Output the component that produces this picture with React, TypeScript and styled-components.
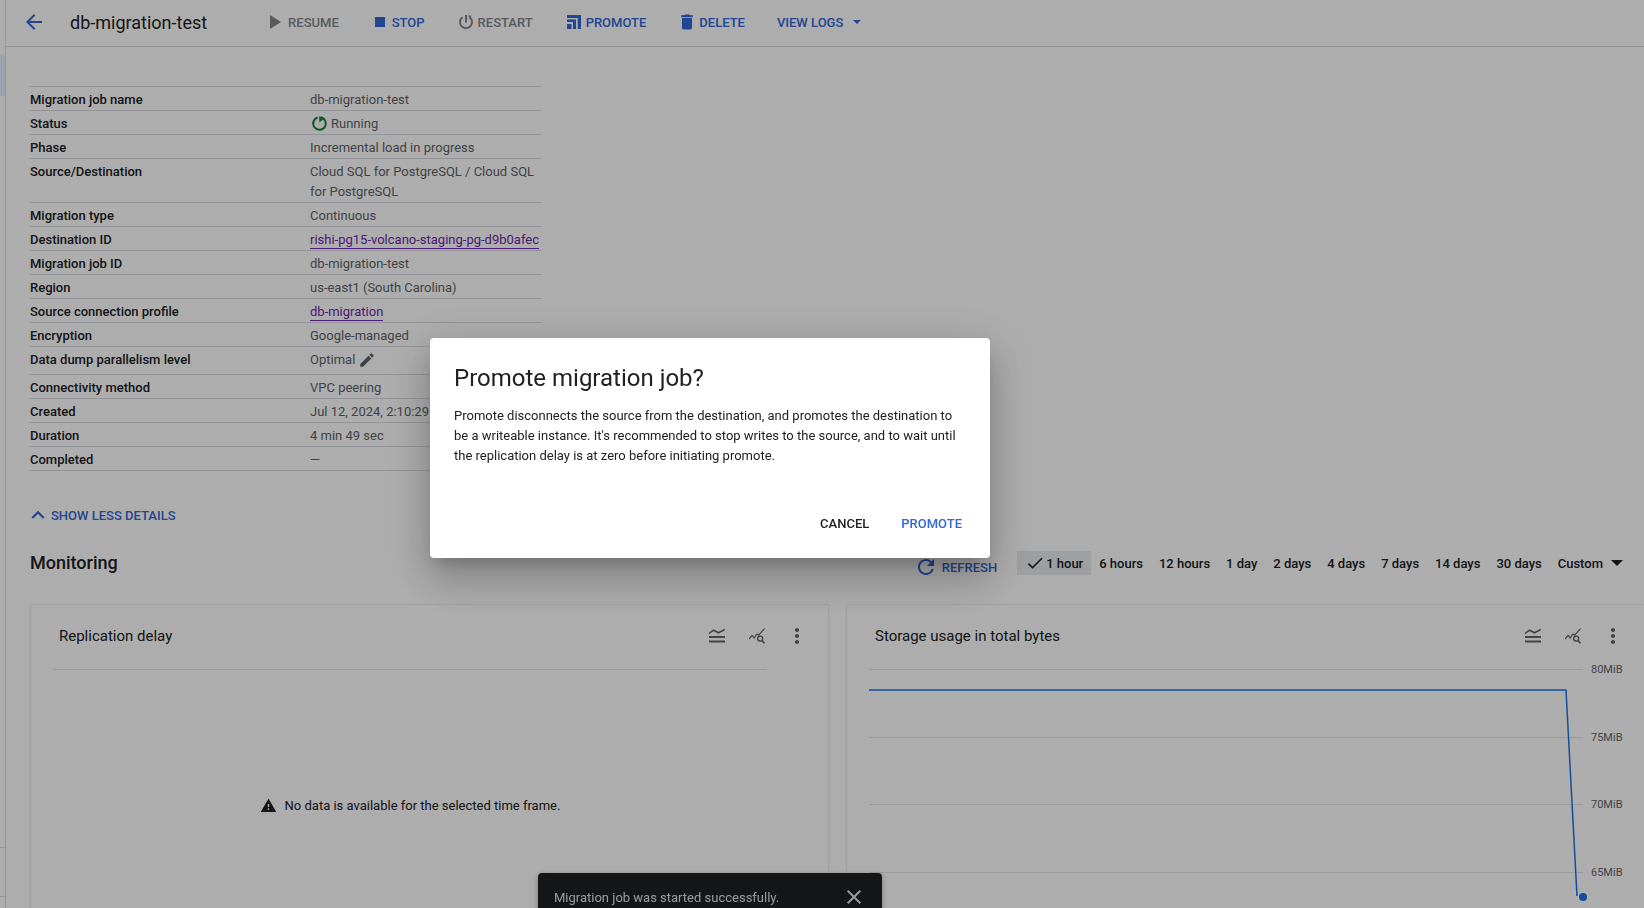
import React from "react";
import styled, { createGlobalStyle } from "styled-components";
import {
  MdArrowBack,
  MdPlayArrow,
  MdStop,
  MdDelete,
  MdEdit,
  MdExpandLess,
  MdRefresh,
  MdCheck,
  MdMoreVert,
  MdWarning,
  MdClose,
} from "react-icons/md";

const GlobalStyle = createGlobalStyle`
  html, body { margin: 0; padding: 0; height: 100%; background: #fff; }
  body { font-family: Roboto, "Liberation Sans", sans-serif; color: #202124; -webkit-font-smoothing: antialiased; }
  * { box-sizing: border-box; }
`;

const Shell = styled.div`
  display: flex;
  width: 100vw;
  height: 100vh;
  overflow: hidden;
`;

const Rail = styled.div`
  flex: 0 0 6px;
  display: flex;
  flex-direction: column;
  padding-top: 55px;
  border-right: 1px solid #dadce0;
`;

const RailHighlight = styled.div`
  height: 41px;
  background: #e8f0fe;
`;

const RailLine = styled.div<{ $gap: number }>`
  margin-top: ${(p) => p.$gap}px;
  border-top: 1px solid #dadce0;
`;

const Main = styled.div`
  flex: 1;
  min-width: 0;
  display: flex;
  flex-direction: column;
`;

const Header = styled.header`
  flex: 0 0 47px;
  display: flex;
  align-items: center;
  padding: 0 0 2px 16px;
  border-bottom: 1px solid #dadce0;
`;

const BackButton = styled.div`
  display: flex;
  color: #3367d6;
  font-size: 24px;
`;

const Title = styled.h1`
  margin: 0 55px 0 24px;
  font-size: 18px;
  font-weight: 400;
  color: #202124;
  white-space: nowrap;
`;

const Actions = styled.div`
  display: flex;
  align-items: center;
  gap: 31px;
`;

const Action = styled.div<{ $disabled?: boolean; $nudge?: number }>`
  display: flex;
  align-items: center;
  gap: 2px;
  margin-left: ${(p) => p.$nudge ?? 0}px;
  font-size: 13px;
  font-weight: 500;
  white-space: nowrap;
  color: ${(p) => (p.$disabled ? "#80868b" : "#3367d6")};
`;

const Caret = styled.span<{ $size: number }>`
  display: inline-block;
  margin-left: 8px;
  border-left: ${(p) => p.$size}px solid transparent;
  border-right: ${(p) => p.$size}px solid transparent;
  border-top: ${(p) => p.$size}px solid currentColor;
`;

const Content = styled.div`
  padding: 39px 0 0 24px;
`;

const DetailTable = styled.div`
  width: 512px;
  border-top: 1px solid #dadce0;
`;

const Row = styled.div`
  display: grid;
  grid-template-columns: 280px 1fr;
  padding-top: 3px;
  border-bottom: 1px solid #dadce0;
  font-size: 13px;
  line-height: 20px;
`;

const Label = styled.div`
  font-weight: 500;
  color: #202124;
`;

const Value = styled.div`
  display: flex;
  align-items: flex-start;
  color: #5f6368;
`;

const ValueLink = styled.a`
  color: #7026ad;
  border-bottom: 1px solid #7026ad;
  height: 19px;
  white-space: nowrap;
`;

const StatusGlyph = styled.svg`
  flex: none;
  margin: 1px 3px 0 1px;
`;

const EditGlyph = styled.span`
  display: flex;
  align-items: center;
  height: 20px;
  margin: 0 0 4px 3px;
  font-size: 18px;
  color: #5f6368;
`;

const ShowLess = styled.div`
  display: flex;
  align-items: center;
  height: 24px;
  margin: 32px 0 0 -5px;
  font-size: 13px;
  font-weight: 500;
  color: #3367d6;
`;

const ChevronBox = styled.span`
  display: flex;
  font-size: 26px;
`;

const MonitorBar = styled.div`
  display: flex;
  align-items: flex-start;
  justify-content: space-between;
  height: 24px;
  margin-top: 24px;
  padding-right: 13px;
`;

const SectionTitle = styled.h2`
  margin: 0;
  font-size: 18px;
  font-weight: 500;
  line-height: 24px;
  color: #202124;
`;

const MonitorTools = styled.div`
  display: flex;
  align-items: flex-start;
`;

const Refresh = styled.div`
  display: flex;
  align-items: center;
  gap: 4px;
  height: 24px;
  margin: 4px 20px 0 0;
  font-size: 13px;
  font-weight: 500;
  color: #3367d6;
`;

const RefreshGlyph = styled(MdRefresh)`
  font-size: 24px;
`;

const Chip = styled.div<{ $active?: boolean }>`
  display: flex;
  align-items: center;
  height: 24px;
  padding: 0 8px;
  font-size: 13px;
  font-weight: 500;
  white-space: nowrap;
  color: #202124;
  background: ${(p) => (p.$active ? "#e8eaed" : "transparent")};
`;

const ChipCheck = styled(MdCheck)`
  font-size: 20px;
  margin-right: 1px;
`;

const Cards = styled.div`
  display: flex;
  gap: 17px;
  margin-top: 29px;
  width: 1616px;
`;

const Card = styled.section`
  flex: 0 0 799px;
  height: 340px;
  display: flex;
  flex-direction: column;
  padding-left: 22px;
  background: #fff;
  border: 1px solid #eceef1;
  border-radius: 2px;
  box-shadow: 0 1px 2px rgba(60, 64, 67, 0.12);
`;

const CardHead = styled.div`
  flex: 0 0 64px;
  display: flex;
  align-items: center;
  justify-content: space-between;
  padding: 0 23px 2px 6px;
`;

const CardTitle = styled.div`
  font-size: 15px;
  color: #202124;
`;

const CardIcons = styled.div`
  display: flex;
  align-items: center;
  gap: 24px;
  color: #5f6368;
`;

const DotsGlyph = styled(MdMoreVert)`
  font-size: 24px;
  margin-left: -4px;
  margin-right: -4px;
`;

const EmptyPlot = styled.div`
  width: 714px;
  height: 272px;
  display: flex;
  align-items: center;
  justify-content: center;
  gap: 8px;
  border-top: 1px solid #e3e5e8;
  font-size: 13px;
  color: #202124;
`;

const WarnGlyph = styled(MdWarning)`
  font-size: 17px;
`;

const Plot = styled.svg`
  display: block;
  overflow: visible;
`;

const PlotLabel = styled.text`
  font-size: 11px;
  fill: #5f6368;
`;

const Snackbar = styled.div`
  position: fixed;
  left: 538px;
  top: 873px;
  width: 344px;
  height: 60px;
  display: flex;
  align-items: flex-start;
  justify-content: space-between;
  padding: 16px 16px 0 16px;
  border-radius: 4px;
  background: #202124;
  color: rgba(255, 255, 255, 0.87);
  font-size: 13px;
  line-height: 18px;
  box-shadow: 0 2px 6px rgba(0, 0, 0, 0.3);
`;

const SnackClose = styled(MdClose)`
  font-size: 24px;
  margin-top: -4px;
  flex: none;
`;

const Scrim = styled.div`
  position: fixed;
  inset: 0;
  background: rgba(0, 0, 0, 0.32);
`;

const Dialog = styled.div`
  position: fixed;
  left: 430px;
  top: 338px;
  width: 560px;
  height: 220px;
  display: flex;
  flex-direction: column;
  padding: 24px;
  background: #fff;
  border-radius: 4px;
  box-shadow: 0 11px 15px -7px rgba(0, 0, 0, 0.2), 0 24px 38px 3px rgba(0, 0, 0, 0.14),
    0 9px 46px 8px rgba(0, 0, 0, 0.12);
`;

const DialogTitle = styled.h2`
  margin: 0;
  font-size: 24px;
  font-weight: 400;
  line-height: 32px;
  color: #202124;
`;

const DialogBody = styled.p`
  margin: 12px 0 0;
  font-size: 13px;
  line-height: 20px;
  color: #202124;
`;

const DialogActions = styled.div`
  margin-top: auto;
  display: flex;
  justify-content: flex-end;
  gap: 32px;
  padding-right: 4px;
`;

const DialogButton = styled.div<{ $primary?: boolean }>`
  font-size: 13px;
  font-weight: 500;
  line-height: 20px;
  color: ${(p) => (p.$primary ? "#3367d6" : "#202124")};
`;

type DetailRow = { label: string; value: React.ReactNode };

const RunningIcon = () => (
  <StatusGlyph width="17" height="17" viewBox="0 0 17 17" fill="none">
    <path d="M9.6 2.3A6.3 6.3 0 1 1 6.6 2.5" stroke="#188038" strokeWidth="2" />
    <path d="M8 1.2 13.2 3.6 8.4 7.6z" fill="#188038" />
  </StatusGlyph>
);

const RestartIcon = () => (
  <svg width="20" height="20" viewBox="0 0 20 20" fill="none" stroke="currentColor" strokeWidth="2">
    <path d="M6.6 5.2A6 6 0 1 0 13.4 5.2" />
    <path d="M10 3v7.5" />
    <path d="M12 3.4 15.6 3.6 13.8 6.6z" fill="currentColor" stroke="none" />
  </svg>
);

const PromoteIcon = () => (
  <svg width="20" height="20" viewBox="0 0 20 20" fill="currentColor">
    <path d="M3 3h14v14h-3.2V6H3zM3 7.5h9V17H9V10H3zM3 12h4.5v5H3z" />
  </svg>
);

const LegendIcon = () => (
  <svg width="16" height="16" viewBox="0 0 16 16" fill="none" stroke="currentColor">
    <path d="M0 5.4 4.5 2.2 9.5 4.8 16 1.4" strokeWidth="1.6" />
    <path d="M0 9h16M0 13.5h16" strokeWidth="2.2" />
  </svg>
);

const ExploreIcon = () => (
  <svg width="16" height="16" viewBox="0 0 16 16" fill="none" stroke="currentColor" strokeWidth="1.2">
    <path d="M0 11 3 7.4 5.2 10 7.8 6 9.6 7.2 15.5 0.6" />
    <circle cx="11.2" cy="10.6" r="2.5" strokeWidth="1.4" fill="#fff" />
    <path d="M13 12.6 15.6 15.4" strokeWidth="1.6" />
  </svg>
);

const rows: DetailRow[] = [
  { label: "Migration job name", value: "db-migration-test" },
  {
    label: "Status",
    value: (
      <>
        <RunningIcon />
        Running
      </>
    ),
  },
  { label: "Phase", value: "Incremental load in progress" },
  { label: "Source/Destination", value: "Cloud SQL for PostgreSQL / Cloud SQL for PostgreSQL" },
  { label: "Migration type", value: "Continuous" },
  { label: "Destination ID", value: <ValueLink>rishi-pg15-volcano-staging-pg-d9b0afec</ValueLink> },
  { label: "Migration job ID", value: "db-migration-test" },
  { label: "Region", value: "us-east1 (South Carolina)" },
  { label: "Source connection profile", value: <ValueLink>db-migration</ValueLink> },
  { label: "Encryption", value: "Google-managed" },
  {
    label: "Data dump parallelism level",
    value: (
      <>
        Optimal
        <EditGlyph>
          <MdEdit />
        </EditGlyph>
      </>
    ),
  },
  { label: "Connectivity method", value: "VPC peering" },
  { label: "Created", value: "Jul 12, 2024, 2:10:29 PM" },
  { label: "Duration", value: "4 min 49 sec" },
  { label: "Completed", value: "—" },
];

const ranges = ["6 hours", "12 hours", "1 day", "2 days", "4 days", "7 days", "14 days", "30 days"];

// grid lines of the storage chart, y is relative to the top of the plot
const gridLines = [
  { y: 0.5, label: "80MiB" },
  { y: 68.5, label: "75MiB" },
  { y: 135.5, label: "70MiB" },
  { y: 203.5, label: "65MiB" },
];

const CardTools = () => (
  <CardIcons>
    <LegendIcon />
    <ExploreIcon />
    <DotsGlyph />
  </CardIcons>
);

export default function App() {
  return (
    <>
      <GlobalStyle />
      <Shell>
        <Rail>
          <RailHighlight />
          <RailLine $gap={751} />
          <RailLine $gap={48} />
        </Rail>
        <Main>
          <Header>
            <BackButton>
              <MdArrowBack />
            </BackButton>
            <Title>db-migration-test</Title>
            <Actions>
              <Action $disabled>
                <MdPlayArrow size={24} />
                RESUME
              </Action>
              <Action>
                <MdStop size={20} />
                STOP
              </Action>
              <Action $disabled>
                <RestartIcon />
                RESTART
              </Action>
              <Action>
                <PromoteIcon />
                PROMOTE
              </Action>
              <Action>
                <MdDelete size={20} />
                DELETE
              </Action>
              <Action $nudge={1}>
                VIEW LOGS
                <Caret $size={4} />
              </Action>
            </Actions>
          </Header>
          <Content>
            <DetailTable>
              {rows.map((row) => (
                <Row key={row.label}>
                  <Label>{row.label}</Label>
                  <Value>{row.value}</Value>
                </Row>
              ))}
            </DetailTable>
            <ShowLess>
              <ChevronBox>
                <MdExpandLess />
              </ChevronBox>
              SHOW LESS DETAILS
            </ShowLess>
            <MonitorBar>
              <SectionTitle>Monitoring</SectionTitle>
              <MonitorTools>
                <Refresh>
                  <RefreshGlyph />
                  REFRESH
                </Refresh>
                <Chip $active>
                  <ChipCheck />1 hour
                </Chip>
                {ranges.map((range) => (
                  <Chip key={range}>{range}</Chip>
                ))}
                <Chip>
                  Custom
                  <Caret $size={6} />
                </Chip>
              </MonitorTools>
            </MonitorBar>
            <Cards>
              <Card>
                <CardHead>
                  <CardTitle>Replication delay</CardTitle>
                  <CardTools />
                </CardHead>
                <EmptyPlot>
                  <WarnGlyph />
                  No data is available for the selected time frame.
                </EmptyPlot>
              </Card>
              <Card>
                <CardHead>
                  <CardTitle>Storage usage in total bytes</CardTitle>
                  <CardTools />
                </CardHead>
                <Plot width="775" height="272" viewBox="0 0 775 272">
                  {gridLines.map((line) => (
                    <g key={line.label}>
                      <line x1="0" x2="714" y1={line.y} y2={line.y} stroke="#e3e5e8" />
                      <PlotLabel x="722" y={line.y + 3}>
                        {line.label}
                      </PlotLabel>
                    </g>
                  ))}
                  <path d="M0 21H697L708 227" fill="none" stroke="#1a73e8" strokeWidth="1.5" />
                  <circle cx="714" cy="228" r="4" fill="#1a73e8" />
                </Plot>
              </Card>
            </Cards>
          </Content>
        </Main>
      </Shell>
      <Snackbar>
        Migration job was started successfully.
        <SnackClose />
      </Snackbar>
      <Scrim />
      <Dialog>
        <DialogTitle>Promote migration job?</DialogTitle>
        <DialogBody>
          Promote disconnects the source from the destination, and promotes the destination to be a writeable
          instance. It's recommended to stop writes to the source, and to wait until the replication delay is at
          zero before initiating promote.
        </DialogBody>
        <DialogActions>
          <DialogButton>CANCEL</DialogButton>
          <DialogButton $primary>PROMOTE</DialogButton>
        </DialogActions>
      </Dialog>
    </>
  );
}
